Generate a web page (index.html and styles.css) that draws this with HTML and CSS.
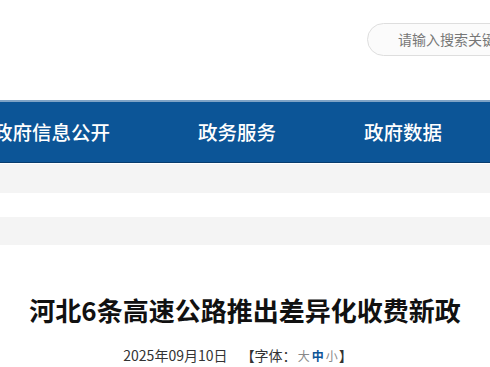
FILE: index.html
```html
<!DOCTYPE html>
<html lang="zh-CN">
<head>
	<meta charset="UTF-8">
	<title>河北6条高速公路推出差异化收费新政</title>
	<link rel="stylesheet" href="styles.css">
</head>
<body>

	<div class="header">
		<div class="search">请输入搜索关键词</div>
	</div>

	<div class="nav">
		<a class="nav-item first">政府信息公开</a>
		<a class="nav-item">政务服务</a>
		<a class="nav-item">政府数据</a>
	</div>

	<div class="crumb"></div>
	<div class="crumb second"></div>

	<div class="article">
		<h1 class="title">河北6条高速公路推出差异化收费新政</h1>
		<div class="info">
			<span class="date">2025年09月10日</span>
			<span class="font-size">【字体：<a class="small">大</a><a class="mid">中</a><a class="small">小</a>】</span>
		</div>
	</div>

</body>
</html>
```

FILE: styles.css
```css
body {
	margin: 0;
	overflow: hidden;
	background: #fff;
	font-family: "Noto Sans CJK SC", "Noto Sans", sans-serif;
}
.header {
	height: 100px;
	padding-left: 367px;
	box-sizing: border-box;
	padding-top: 23px;
	white-space: nowrap;
}
.search {
	width: 200px;
	height: 33px;
	box-sizing: border-box;
	border: 1px solid #dedede;
	border-radius: 17px;
	background: #fbfbfb;
	color: #777;
	font-size: 14px;
	line-height: 31px;
	padding-left: 30px;
}
.nav {
	height: 60px;
	background: #0c5597;
	border-top: 2px solid #7fa3c6;
	border-bottom: 1px solid #083d6e;
	display: flex;
	align-items: center;
	gap: 88px;
	white-space: nowrap;
}
.nav-item {
	color: #fff;
	font-size: 19.5px;
	font-weight: 500;
	line-height: 26px;
}
.nav-item.first {
	margin-left: -7px;
}
.crumb {
	height: 29px;
	background: #f4f4f4;
	margin-top: 1px;
}
.crumb.second {
	margin-top: 24px;
	height: 28px;
}
.article {
	padding-top: 47px;
	text-align: center;
}
.title {
	margin: 0;
	font-size: 26px;
	line-height: 36px;
	font-weight: bold;
	color: #111;
}
.info {
	margin-top: 17px;
	margin-right: 14px;
	font-size: 14px;
	line-height: 20px;
	color: #333;
}
.date {
	margin-right: 10px;
}
.small,
.mid {
	font-size: 12px;
	margin: 0 1px;
}
.small {
	color: #888;
}
.mid {
	color: #0c5597;
	font-weight: bold;
}
```
